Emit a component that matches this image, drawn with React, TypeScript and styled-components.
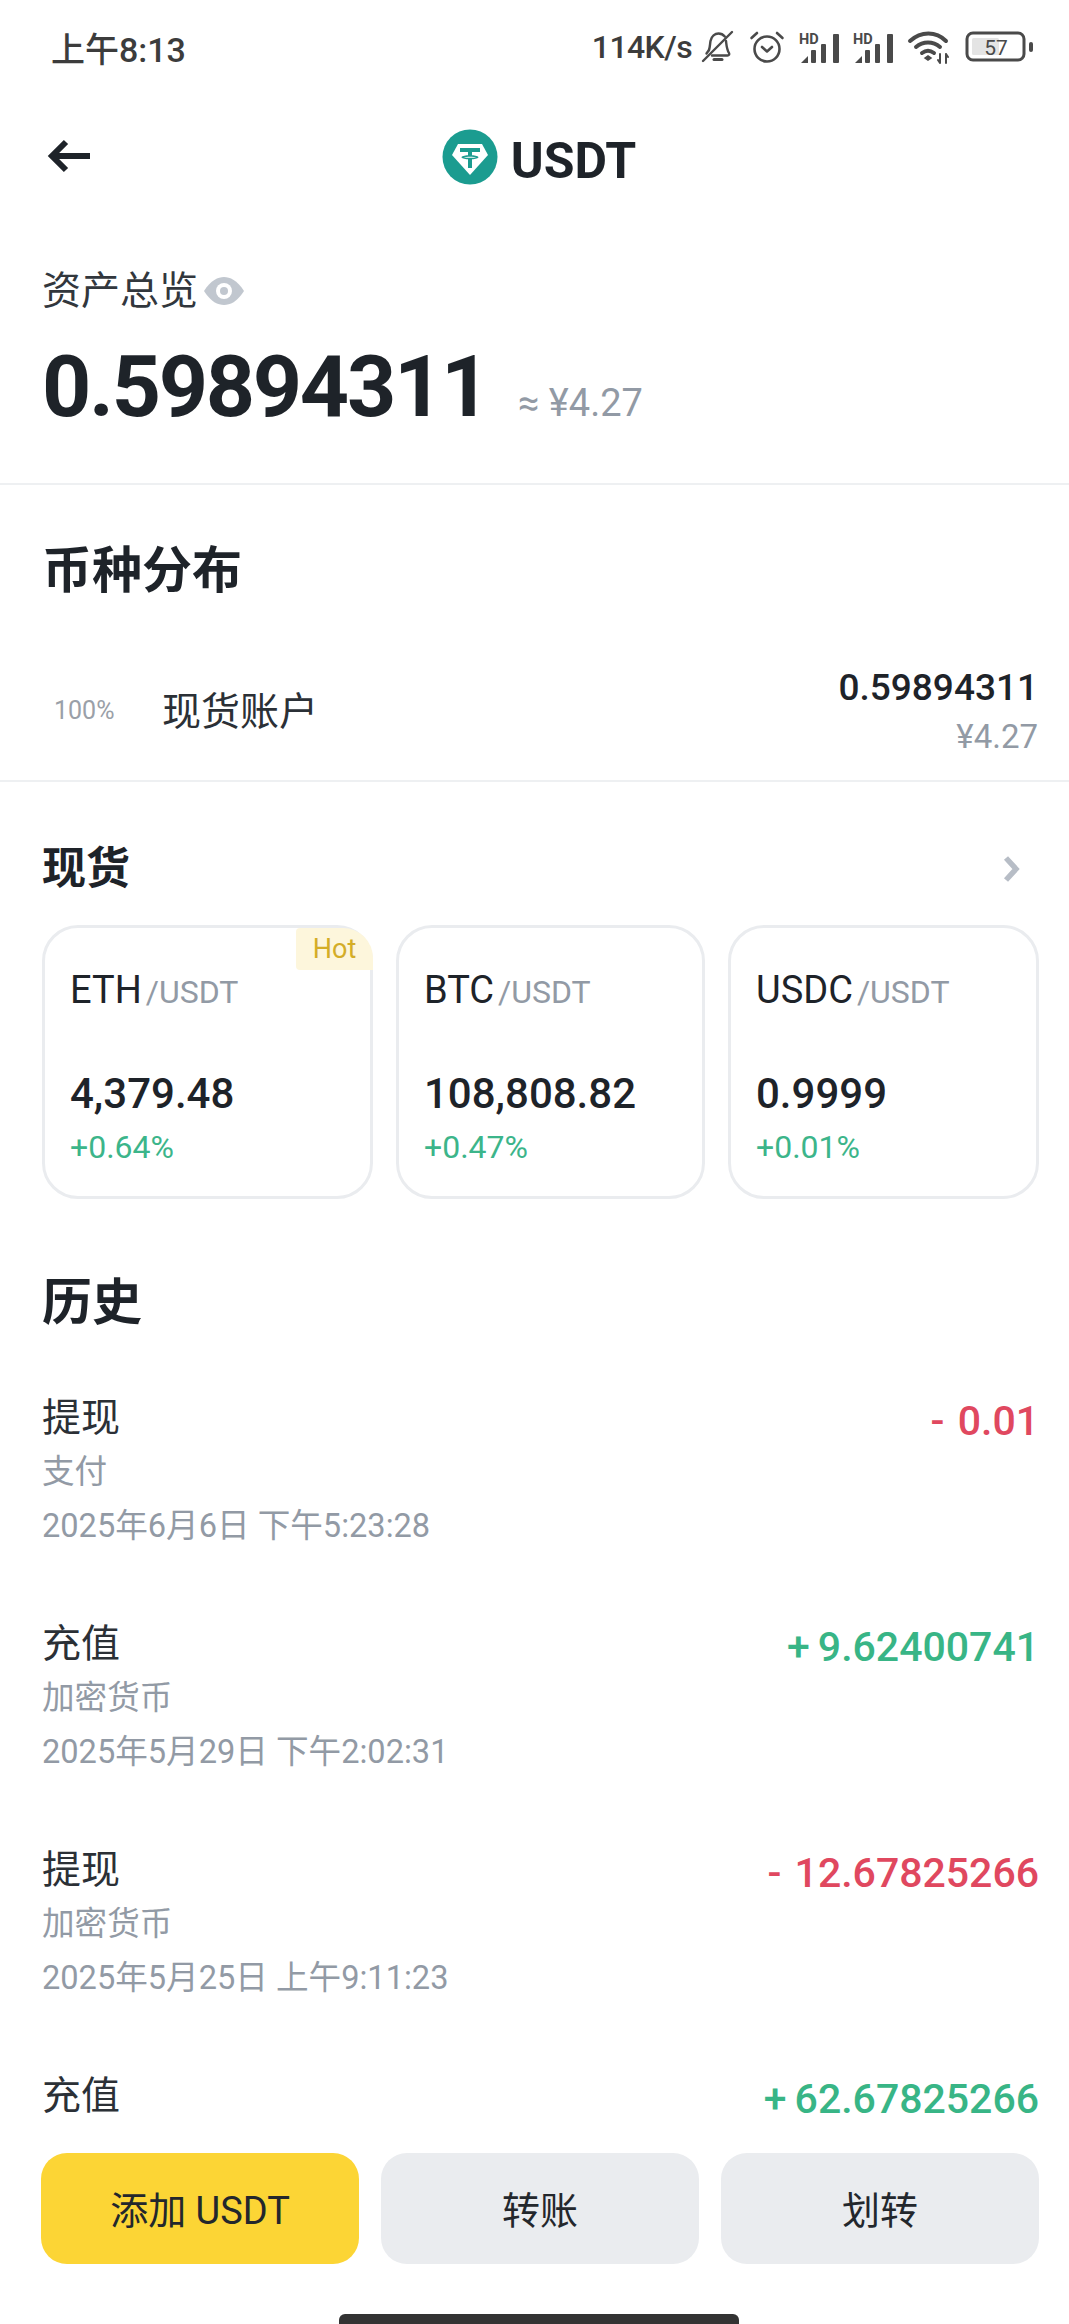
import React from "react";
import styled, { createGlobalStyle } from "styled-components";

const Global = createGlobalStyle`
  html, body { margin: 0; padding: 0; background: #fff; }
  * { box-sizing: border-box; }
`;

const Page = styled.div`
  width: 1069px;
  height: 2324px;
  overflow: hidden;
  display: flex;
  flex-direction: column;
  background: #fff;
  color: #1e2329;
  font-family: Roboto, "Noto Sans CJK SC", sans-serif;
`;

const Scroll = styled.main`
  flex: 1;
  min-height: 0;
  overflow: hidden;
`;

const StatusBar = styled.div`
  height: 98px;
  padding: 0 34px 4px 51px;
  display: flex;
  align-items: center;
  justify-content: space-between;
  color: #3c3c3c;
`;
const Time = styled.span`
  font-size: 34px;
  font-weight: 500;
`;
const StatusRight = styled.div`
  display: flex;
  align-items: center;
  gap: 14px;
`;
const Speed = styled.span`
  margin-right: -5px;
  font-size: 32px;
  font-weight: 500;
  letter-spacing: -0.6px;
`;

const Header = styled.header`
  height: 118px;
  padding: 0 42px;
  display: flex;
  align-items: center;
  justify-content: center;
  position: relative;
`;
const Back = styled.div`
  position: absolute;
  left: 47px;
  top: 41px;
  display: flex;
`;
const Title = styled.h1`
  margin: 0;
  padding-left: 9px;
  display: flex;
  align-items: center;
  gap: 13px;
  font-size: 50px;
  font-weight: 700;
  line-height: 60px;
`;
const TitleText = styled.span`
  padding-top: 8px;
`;

const Overview = styled.section`
  height: 269px;
  padding: 50px 32px 0 42px;
  border-bottom: 2px solid #eef0f2;
`;
const OverviewLabel = styled.div`
  display: flex;
  align-items: center;
  gap: 6px;
  font-size: 39px;
  line-height: 50px;
  color: #32373d;
`;
const TotalRow = styled.div`
  margin-top: 21px;
  display: flex;
  align-items: baseline;
  gap: 30px;
`;
const Total = styled.span`
  font-size: 86px;
  font-weight: 700;
  line-height: 100px;
  letter-spacing: -2.3px;
`;
const TotalFiat = styled.span`
  font-size: 38px;
  color: #929aa5;
`;

const Distribution = styled.section`
  height: 297px;
  padding: 53px 31px 0 42px;
  border-bottom: 2px solid #eef0f2;
`;
const H2 = styled.h2`
  margin: 0;
  font-size: 50px;
  line-height: 66px;
  font-weight: 700;
`;
const AccountRow = styled.div`
  margin-top: 60px;
  display: flex;
  align-items: center;
`;
const Percent = styled.span`
  width: 120px;
  margin-top: -6px;
  padding-left: 12px;
  font-size: 25px;
  color: #9aa0a8;
`;
const AccountName = styled.span`
  flex: 1;
  margin-top: -10px;
  font-size: 39px;
  color: #2b3036;
`;
const AccountValues = styled.div`
  display: flex;
  flex-direction: column;
  align-items: flex-end;
`;
const AccountValue = styled.span`
  font-size: 37px;
  font-weight: 500;
  line-height: 48px;
`;
const AccountFiat = styled.span`
  font-size: 33px;
  line-height: 50px;
  color: #929aa5;
`;

const Spot = styled.section`
  padding: 57px 30px 0 42px;
`;
const SpotHead = styled.div`
  display: flex;
  align-items: center;
  justify-content: space-between;
  height: 60px;
  padding-right: 17px;
`;
const H3 = styled.h3`
  margin: 0;
  font-size: 44px;
  font-weight: 700;
  line-height: 60px;
`;
const Cards = styled.div`
  margin-top: 26px;
  display: grid;
  grid-template-columns: 331px 309px 311px;
  gap: 23px;
`;
const Card = styled.div`
  position: relative;
  height: 274px;
  padding: 39px 0 0 25px;
  border: 3px solid #eaecef;
  border-radius: 36px;
`;
const HotBadge = styled.span`
  position: absolute;
  top: 0;
  right: -3px;
  width: 77px;
  height: 42px;
  display: flex;
  align-items: center;
  justify-content: center;
  font-size: 27px;
  color: #d4ad27;
  background: #fdf6dc;
  border-radius: 4px 30px 0 4px;
`;
const Pair = styled.div`
  display: flex;
  align-items: baseline;
  gap: 4px;
  line-height: 46px;
  font-size: 38px;
`;
const Quote = styled.span`
  font-size: 32px;
  color: #929aa5;
`;
const Price = styled.div`
  margin-top: 54px;
  font-size: 42px;
  font-weight: 500;
  line-height: 50px;
`;
const Change = styled.div`
  margin-top: 6px;
  font-size: 32px;
  line-height: 44px;
  color: #3cb58a;
`;

const History = styled.section`
  padding: 71px 30px 0 42px;
`;
const HistoryList = styled.div`
  margin-top: 57px;
`;
const Row = styled.div`
  height: 226px;
  display: flex;
  align-items: flex-start;
  justify-content: space-between;
`;
const RowInfo = styled.div`
  display: flex;
  flex-direction: column;
`;
const RowTitle = styled.span`
  font-size: 39px;
  line-height: 50px;
  color: #2b3036;
`;
const RowMeta = styled.span`
  margin-top: 5px;
  font-size: 32.6px;
  line-height: 49px;
  color: #929aa5;
`;
const Amount = styled.span<{ $up: boolean }>`
  padding-top: 3px;
  font-size: 41px;
  font-weight: 500;
  line-height: 50px;
  word-spacing: ${(p) => (p.$up ? "-2px" : "3px")};
  color: ${(p) => (p.$up ? "#38b586" : "#e0485f")};
`;

const Footer = styled.footer`
  flex: none;
  height: 188px;
  background: #fff;
  padding: 17px 30px 0 41px;
  display: flex;
  flex-direction: column;
  align-items: center;
`;
const Buttons = styled.div`
  width: 100%;
  display: grid;
  grid-template-columns: repeat(3, 1fr);
  gap: 22px;
`;
const Button = styled.button<{ $primary?: boolean }>`
  height: 111px;
  padding: 0 0 2px;
  border: 0;
  border-radius: 26px;
  font-family: inherit;
  font-size: 38px;
  color: #23272c;
  background: ${(p) => (p.$primary ? "#fcd535" : "#eaecef")};
`;
const HomeBar = styled.div`
  margin: 50px 0 0 -2px;
  width: 400px;
  height: 10px;
  flex: none;
  border-radius: 6px 6px 0 0;
  background: #333;
`;

const ink = "#4a4a4a";

const BellOff = () => (
  <svg width="34" height="34" viewBox="0 0 34 34" fill="none" stroke={ink} strokeWidth="2.4" strokeLinecap="round" strokeLinejoin="round">
    <path d="M8 20c1-3 1-6 1.500-9C10.500 6 14 3.500 17.500 3.500c2.500 0 4.800 1.200 6.300 3" />
    <path d="M25 11c.5 4 .6 8 3 12 .7 1.300 0 2.500-1.500 2.500H11" />
    <path d="M8 20l-2.500 3.500" />
    <path d="M2 31L31 2" />
    <path d="M13 29.500h8" strokeWidth="3" />
  </svg>
);

const Alarm = () => (
  <svg width="36" height="34" viewBox="0 0 36 34" fill="none" stroke={ink} strokeWidth="2.600" strokeLinecap="round" strokeLinejoin="round">
    <circle cx="18" cy="19" r="12.500" />
    <path d="M13 17l5 4.500 5-4.500" />
    <path d="M2.500 8L8 3" />
    <path d="M33.500 8L28 3" />
  </svg>
);

const Signal = () => (
  <svg width="40" height="36" viewBox="0 -4 40 36" fill={ink}>
    <text x="0" y="11" fontFamily="Roboto, sans-serif" fontSize="14.500" fontWeight="700">HD</text>
    <path d="M2 30l7-7v7z" />
    <rect x="12" y="17" width="5" height="13" rx="1" />
    <rect x="22" y="11" width="5" height="19" rx="1" />
    <rect x="34" y="1" width="6" height="29" rx="1" />
  </svg>
);

const Wifi = () => (
  <svg width="44" height="34" viewBox="0 0 44 34" fill="none" stroke={ink} strokeWidth="4" strokeLinecap="round">
    <path d="M3 11c11-10 26-10 36 0" />
    <path d="M9 17c7-6 17-6 24 0" />
    <path d="M15 23c4-3 8-3 12 0" />
    <path d="M18 28l3-2 3 2-3 2z" fill={ink} strokeWidth="1.500" />
    <path d="M33 24v9M31 30l2 3M39 33v-9M39 24l2 3" strokeWidth="2" />
  </svg>
);

const Battery = () => (
  <svg width="70" height="32" viewBox="0 0 70 32" fill="none">
    <rect x="2" y="2" width="57" height="27" rx="6" stroke={ink} strokeWidth="3" />
    <rect x="7" y="7" width="27" height="17" rx="1.500" fill="#e4e4e4" />
    <text x="31" y="24" textAnchor="middle" fontFamily="Roboto, sans-serif" fontSize="21" fill={ink}>57</text>
    <rect x="64" y="11" width="4" height="10" rx="2" fill={ink} />
  </svg>
);

const BackArrow = () => (
  <svg width="43" height="34" viewBox="0 0 43 34" fill="none" stroke="#1e2329" strokeWidth="6" strokeLinejoin="miter">
    <path d="M19 3L5 17l14 14" />
    <path d="M6 17h37" />
  </svg>
);

const TetherLogo = () => (
  <svg width="56" height="56" viewBox="0 0 56 56">
    <circle cx="28" cy="28" r="27.500" fill="#1b9c90" />
    <path d="M16 15h24l6 11-18 20L10 26z" fill="#fff" />
    <path d="M18 19h20v4h-8v3.200c3.500.2 6.500 1 6.500 2s-3 1.800-6.500 2V39h-4v-8.800c-3.500-.2-6.500-1-6.500-2s3-1.800 6.500-2V23h-8z" fill="#1b9c90" />
    <path d="M22 28.200c2-.7 10-.7 12 0-2 .7-10 .7-12 0z" fill="#fff" />
  </svg>
);

const EyeIcon = () => (
  <svg width="40" height="30" viewBox="0 0 40 30">
    <path d="M0 15C7 4 14 1 20 1s13 3 20 14c-7 11-14 14-20 14S7 26 0 15z" fill="#c1c7cf" />
    <circle cx="20" cy="15" r="8" fill="#fff" />
    <circle cx="20" cy="15" r="4" fill="#c1c7cf" />
  </svg>
);

const Chevron = () => (
  <svg width="20" height="28" viewBox="0 0 20 28" fill="none" stroke="#b7bdc6" strokeWidth="5.500">
    <path d="M4 3l10 11L4 25" />
  </svg>
);

const pairs = [
  { base: "ETH", price: "4,379.48", change: "+0.64%", hot: true },
  { base: "BTC", price: "108,808.82", change: "+0.47%" },
  { base: "USDC", price: "0.9999", change: "+0.01%" },
];

const history = [
  { title: "提现", meta: "支付", date: "2025年6月6日 下午5:23:28", amount: "- 0.01", up: false },
  { title: "充值", meta: "加密货币", date: "2025年5月29日 下午2:02:31", amount: "+ 9.62400741", up: true },
  { title: "提现", meta: "加密货币", date: "2025年5月25日 上午9:11:23", amount: "- 12.67825266", up: false },
  { title: "充值", amount: "+ 62.67825266", up: true },
];

export default function App() {
  return (
    <Page>
      <Global />
      <Scroll>
        <StatusBar>
          <Time>上午8:13</Time>
          <StatusRight>
            <Speed>114K/s</Speed>
            <BellOff />
            <Alarm />
            <Signal />
            <Signal />
            <Wifi />
            <Battery />
          </StatusRight>
        </StatusBar>
        <Header>
          <Back><BackArrow /></Back>
          <Title><TetherLogo /><TitleText>USDT</TitleText></Title>
        </Header>
        <Overview>
          <OverviewLabel>资产总览<EyeIcon /></OverviewLabel>
          <TotalRow>
            <Total>0.59894311</Total>
            <TotalFiat>≈ ¥4.27</TotalFiat>
          </TotalRow>
        </Overview>
        <Distribution>
          <H2>币种分布</H2>
          <AccountRow>
            <Percent>100%</Percent>
            <AccountName>现货账户</AccountName>
            <AccountValues>
              <AccountValue>0.59894311</AccountValue>
              <AccountFiat>¥4.27</AccountFiat>
            </AccountValues>
          </AccountRow>
        </Distribution>
        <Spot>
          <SpotHead>
            <H3>现货</H3>
            <Chevron />
          </SpotHead>
          <Cards>
            {pairs.map((p) => (
              <Card key={p.base}>
                {p.hot && <HotBadge>Hot</HotBadge>}
                <Pair>{p.base}<Quote>/USDT</Quote></Pair>
                <Price>{p.price}</Price>
                <Change>{p.change}</Change>
              </Card>
            ))}
          </Cards>
        </Spot>
        <History>
          <H2>历史</H2>
          <HistoryList>
            {history.map((h, i) => (
              <Row key={i}>
                <RowInfo>
                  <RowTitle>{h.title}</RowTitle>
                  {h.meta && <RowMeta>{h.meta}</RowMeta>}
                  {h.date && <RowMeta>{h.date}</RowMeta>}
                </RowInfo>
                <Amount $up={h.up}>{h.amount}</Amount>
              </Row>
            ))}
          </HistoryList>
        </History>
      </Scroll>
      <Footer>
        <Buttons>
          <Button $primary>添加 USDT</Button>
          <Button>转账</Button>
          <Button>划转</Button>
        </Buttons>
        <HomeBar />
      </Footer>
    </Page>
  );
}
